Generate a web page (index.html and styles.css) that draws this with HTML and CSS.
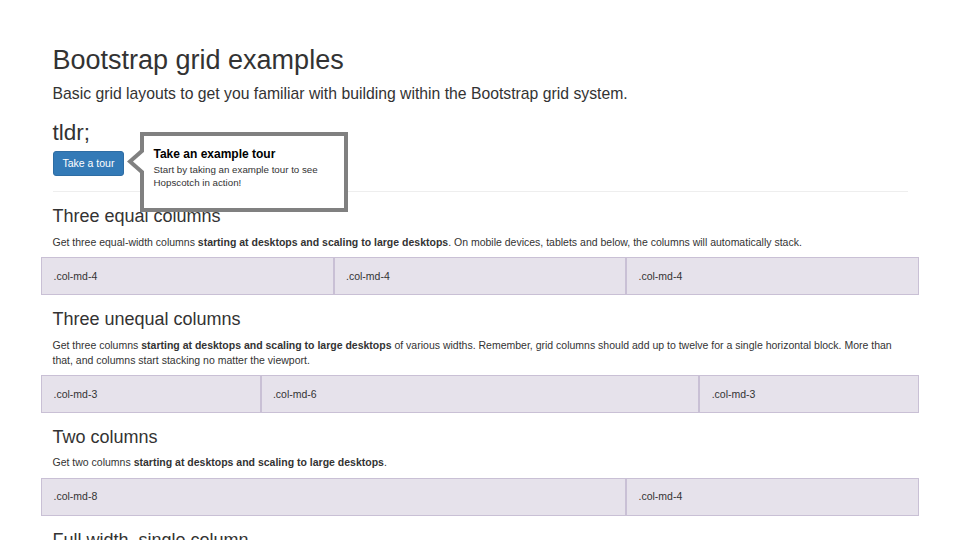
FILE: index.html
```html
<!DOCTYPE html>
<html lang="en">
<head>
<meta charset="utf-8">
<title>Bootstrap grid examples</title>
<link rel="stylesheet" href="styles.css">
</head>
<body>
<div class="container">
  <h1 class="title">Bootstrap grid examples</h1>
  <p class="lead">Basic grid layouts to get you familiar with building within the Bootstrap grid system.</p>

  <h2 class="tldr">tldr;</h2>
  <div class="tour">
    <button class="btn btn-primary" type="button">Take a tour</button>
    <div class="bubble">
      <svg class="bubble-arrow" width="18" height="23" viewBox="0 0 18 23" aria-hidden="true">
        <polygon points="0,11.5 13,0 13,23" fill="#808080"/>
        <polygon points="6,11.5 18,0.9 18,22.1" fill="#ffffff"/>
      </svg>
      <h3 class="bubble-title">Take an example tour</h3>
      <div class="bubble-content">Start by taking an example tour to see Hopscotch in action!</div>
    </div>
  </div>

  <hr class="divider">

  <h3 class="section-title">Three equal columns</h3>
  <p class="desc">Get three equal-width columns <strong>starting at desktops and scaling to large desktops</strong>. On mobile devices, tablets and below, the columns will automatically stack.</p>
  <div class="row">
    <div class="col col-md-4">.col-md-4</div>
    <div class="col col-md-4">.col-md-4</div>
    <div class="col col-md-4">.col-md-4</div>
  </div>

  <h3 class="section-title">Three unequal columns</h3>
  <p class="desc">Get three columns <strong>starting at desktops and scaling to large desktops</strong> of various widths. Remember, grid columns should add up to twelve for a single horizontal block. More than that, and columns start stacking no matter the viewport.</p>
  <div class="row">
    <div class="col col-md-3">.col-md-3</div>
    <div class="col col-md-6">.col-md-6</div>
    <div class="col col-md-3">.col-md-3</div>
  </div>

  <h3 class="section-title">Two columns</h3>
  <p class="desc">Get two columns <strong>starting at desktops and scaling to large desktops</strong>.</p>
  <div class="row">
    <div class="col col-md-8">.col-md-8</div>
    <div class="col col-md-4">.col-md-4</div>
  </div>

  <h3 class="section-title">Full width, single column</h3>
  <p class="desc">No grid classes are necessary for full-width elements.</p>
</div>
</body>
</html>
```

FILE: styles.css
```css
* {
  box-sizing: border-box;
}

html, body {
  margin: 0;
  background: #ffffff;
}

body {
  padding-top: 30.5px;
  font-family: "Liberation Sans", Arial, Helvetica, sans-serif;
  font-size: 10.5px;
  line-height: 15px;
  color: #333333;
}

.container {
  max-width: 877.5px;
  margin: 0 auto;
  padding: 0 11.25px;
}

.title {
  font-size: 27px;
  line-height: 1.1;
  font-weight: 400;
  margin: 15px 0 7.5px;
}

.lead {
  font-size: 15.75px;
  line-height: 1.4;
  margin: 0 0 15px;
}

.tldr {
  font-size: 22.5px;
  line-height: 1.1;
  font-weight: 400;
  margin: 16px 0 6px;
}

.tour {
  position: relative;
  display: flex;
  align-items: flex-start;
}

.btn {
  font-family: inherit;
  font-size: 10.5px;
  line-height: 15px;
  padding: 4px 9px;
  border-radius: 3px;
  cursor: pointer;
}

.btn-primary {
  color: #ffffff;
  background-color: #337ab7;
  border: 1px solid #2e6da4;
}

.bubble {
  position: absolute;
  left: 87px;
  top: -19px;
  width: 208px;
  background: #ffffff;
  border: 4px solid #808080;
  padding: 10px;
  z-index: 10;
}

.bubble-arrow {
  position: absolute;
  left: -17px;
  top: 14px;
  display: block;
}

.bubble-title {
  margin: 1px 0 0;
  font-size: 12px;
  line-height: 14.25px;
  font-weight: 700;
  color: #000000;
}

.bubble-content {
  margin: 1px 0 9px;
  font-size: 9.75px;
  line-height: 13px;
  color: #333333;
}

.divider {
  margin: 15px 0;
  border: 0;
  border-top: 1px solid #eeeeee;
  height: 0;
}

.section-title {
  font-size: 18px;
  line-height: 1.1;
  font-weight: 400;
  margin: 15px 0 7.5px;
}

.desc {
  margin: 0 0 7.5px;
}

.row {
  display: grid;
  grid-template-columns: repeat(12, 1fr);
  margin: 0 -11.25px 15px;
}

.col {
  padding: 10.5px 11.25px;
  line-height: 15px;
  background-color: rgba(86, 61, 124, 0.15);
  border: 1px solid rgba(86, 61, 124, 0.2);
}

.col-md-3 { grid-column: span 3; }
.col-md-4 { grid-column: span 4; }
.col-md-6 { grid-column: span 6; }
.col-md-8 { grid-column: span 8; }
```
